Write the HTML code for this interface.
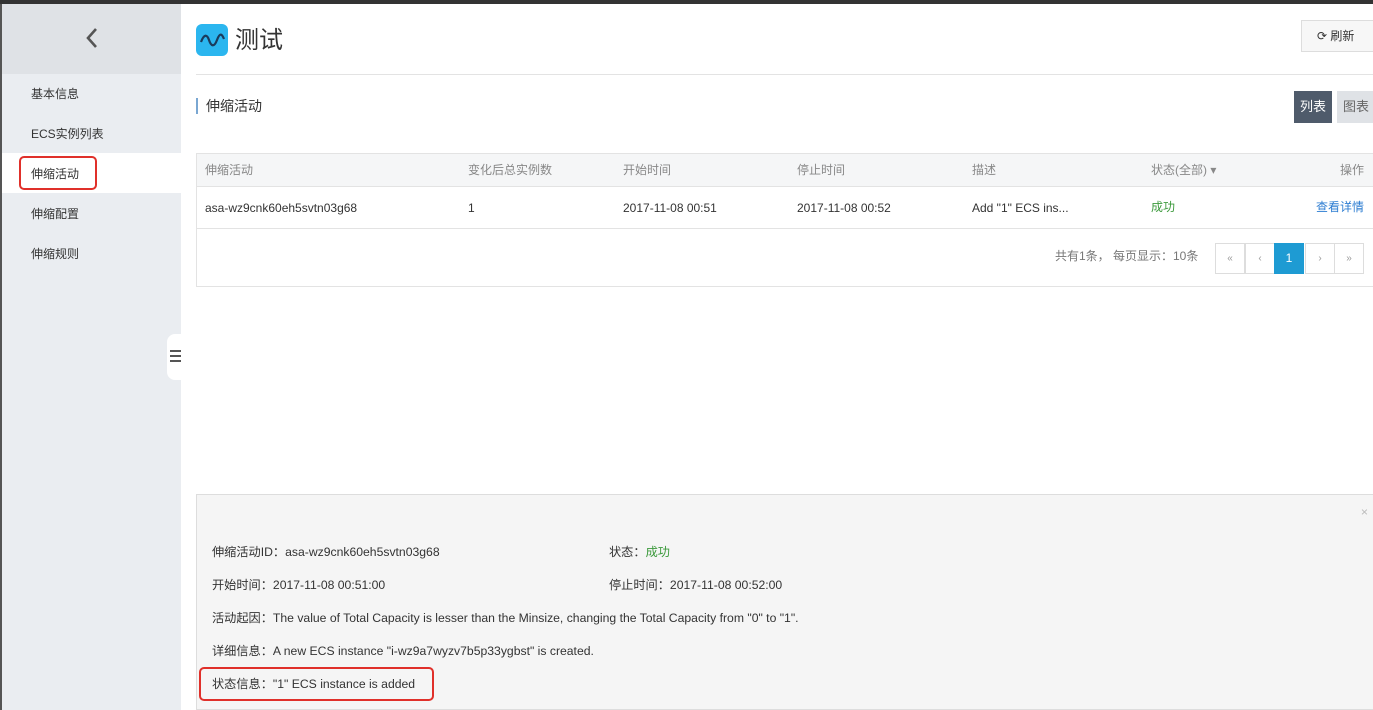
<!DOCTYPE html>
<html><head><meta charset="utf-8"><style>
*{margin:0;padding:0;box-sizing:border-box}
body{width:1373px;height:710px;overflow:hidden;background:#fff;font-family:"Liberation Sans","Noto Sans CJK SC",sans-serif;font-size:12px;color:#333;position:relative}
.a{position:absolute}
.side{left:0;top:4px;width:181px;height:706px;background:#eaedf1;border-left:2px solid #555}
.sh{left:0;top:0;width:179px;height:70px;background:#dfe2e6}
.mi{left:29px;font-size:12px;color:#333}
.red{border:2px solid #e0302a;border-radius:5px}
.pg{top:243px;height:31px;width:30px;border:1px solid #ddd;background:#fff;color:#999;font-size:10px;text-align:center;line-height:29px}
</style></head><body>
<div class="a" style="left:0;top:0;width:1373px;height:4px;background:#333"></div>
<div class="a side">
 <div class="a sh"></div>
 <svg class="a" style="left:82px;top:23px" width="16" height="22"><path d="M12 2 L4 11 L12 20" stroke="#555" stroke-width="2.6" fill="none"/></svg>
 <div class="a mi" style="top:81px">基本信息</div>
 <div class="a mi" style="top:121px">ECS实例列表</div>
 <div class="a" style="left:0;top:149px;width:179px;height:40px;background:#fff"></div>
 <div class="a mi" style="top:161px">伸缩活动</div>
 <div class="a red" style="left:17px;top:152px;width:78px;height:34px"></div>
 <div class="a mi" style="top:201px">伸缩配置</div>
 <div class="a mi" style="top:241px">伸缩规则</div>
</div>
<div class="a" style="left:167px;top:334px;width:14px;height:46px;background:#fff;border-radius:8px 0 0 8px"></div>
<div class="a" style="left:170px;top:350px;width:11px;height:2px;background:#555;box-shadow:0 5px 0 #555,0 10px 0 #555"></div>
<div class="a" style="left:196px;top:24px;width:32px;height:32px;background:#2bb6ef;border-radius:6px"></div>
<svg class="a" style="left:198px;top:30px" width="28" height="20"><path d="M3 12 C6 4,9 4,11 10 S16 18,19 10 S24 4,26 9" stroke="#1a3b5c" stroke-width="2.2" fill="none"/></svg>
<div class="a" style="left:235px;top:20px;font-size:24px;color:#333">测试</div>
<div class="a" style="left:1301px;top:20px;width:74px;height:32px;border:1px solid #ddd;background:#f7f7f7;font-size:12px;line-height:30px;padding-left:15px">⟳ 刷新</div>
<div class="a" style="left:196px;top:74px;width:1177px;height:1px;background:#e3e3e3"></div>
<div class="a" style="left:196px;top:98px;width:2px;height:16px;background:#7aa7d2"></div>
<div class="a" style="left:206px;top:96px;font-size:14px">伸缩活动</div>
<div class="a" style="left:1294px;top:91px;width:38px;height:32px;background:#4f5b6b;color:#fff;font-size:13px;line-height:32px;text-align:center">列表</div>
<div class="a" style="left:1337px;top:91px;width:38px;height:32px;background:#dfe2e6;color:#666;font-size:13px;line-height:32px;text-align:center">图表</div>
<div class="a" style="left:196px;top:153px;width:1177px;height:134px;border:1px solid #e3e3e3;border-right:none"></div>
<div class="a" style="left:197px;top:154px;width:1176px;height:33px;background:#f5f6f7;border-bottom:1px solid #e3e3e3;color:#888;font-size:12px">
 <span class="a" style="left:8px;top:7px">伸缩活动</span><span class="a" style="left:271px;top:7px">变化后总实例数</span><span class="a" style="left:426px;top:7px">开始时间</span><span class="a" style="left:600px;top:7px">停止时间</span><span class="a" style="left:775px;top:7px">描述</span><span class="a" style="left:954px;top:7px">状态(全部) ▾</span><span class="a" style="left:1143px;top:7px">操作</span>
</div>
<div class="a" style="left:197px;top:187px;width:1176px;height:42px;border-bottom:1px solid #e3e3e3;font-size:12px">
 <span class="a" style="left:8px;top:14px">asa-wz9cnk60eh5svtn03g68</span><span class="a" style="left:271px;top:14px">1</span><span class="a" style="left:426px;top:14px">2017-11-08 00:51</span><span class="a" style="left:600px;top:14px">2017-11-08 00:52</span><span class="a" style="left:775px;top:14px">Add "1" ECS ins...</span><span class="a" style="left:954px;top:11px;color:#3c9a3c">成功</span><span class="a" style="left:1119px;top:11px;color:#2d7dd2">查看详情</span>
</div>
<div class="a" style="left:1055px;top:247px;color:#777;font-size:12px">共有1条， 每页显示：10条</div>
<div class="a pg" style="left:1215px">«</div><div class="a pg" style="left:1245px">‹</div>
<div class="a pg" style="left:1274px;background:#1e9bd3;border-color:#1e9bd3;color:#fff;font-size:12px">1</div>
<div class="a pg" style="left:1305px">›</div><div class="a pg" style="left:1334px">»</div>
<div class="a" style="left:196px;top:494px;width:1177px;height:216px;background:#f5f5f5;border:1px solid #ddd;border-right:none;font-size:12.2px">
 <span class="a" style="right:5px;top:10px;color:#bbb">×</span>
 <span class="a" style="left:15px;top:47px">伸缩活动ID：asa-wz9cnk60eh5svtn03g68</span>
 <span class="a" style="left:412px;top:47px">状态：<span style="color:#3c9a3c">成功</span></span>
 <span class="a" style="left:15px;top:80px">开始时间：2017-11-08 00:51:00</span>
 <span class="a" style="left:412px;top:80px">停止时间：2017-11-08 00:52:00</span>
 <span class="a" style="left:15px;top:113px">活动起因：The value of Total Capacity is lesser than the Minsize, changing the Total Capacity from "0" to "1".</span>
 <span class="a" style="left:15px;top:146px">详细信息：A new ECS instance "i-wz9a7wyzv7b5p33ygbst" is created.</span>
 <span class="a" style="left:15px;top:179px">状态信息："1" ECS instance is added</span>
</div>
<div class="a red" style="left:199px;top:667px;width:235px;height:34px"></div>
</body></html>
